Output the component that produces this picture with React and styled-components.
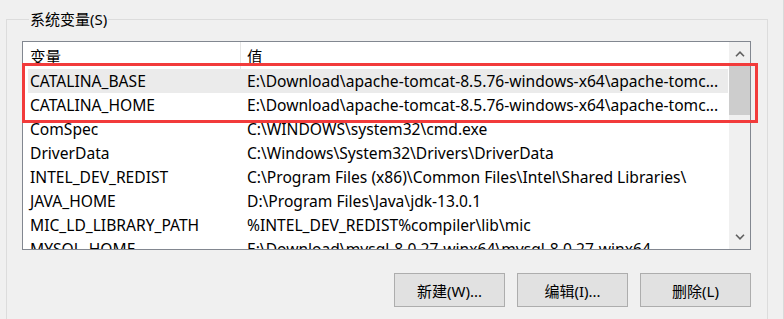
import React from 'react';
import styled, { createGlobalStyle } from 'styled-components';

const GlobalStyle = createGlobalStyle`
  html, body {
    margin: 0;
    padding: 0;
    background: #f0f0f0;
  }
  body {
    font-family: "Noto Sans", "Noto Sans CJK SC", sans-serif;
    font-size: 15px;
    color: #000;
  }
`;

const variables = [
  { name: 'CATALINA_BASE', value: 'E:\\Download\\apache-tomcat-8.5.76-windows-x64\\apache-tomc...', selected: true },
  { name: 'CATALINA_HOME', value: 'E:\\Download\\apache-tomcat-8.5.76-windows-x64\\apache-tomc...' },
  { name: 'ComSpec', value: 'C:\\WINDOWS\\system32\\cmd.exe' },
  { name: 'DriverData', value: 'C:\\Windows\\System32\\Drivers\\DriverData' },
  { name: 'INTEL_DEV_REDIST', value: 'C:\\Program Files (x86)\\Common Files\\Intel\\Shared Libraries\\' },
  { name: 'JAVA_HOME', value: 'D:\\Program Files\\Java\\jdk-13.0.1' },
  { name: 'MIC_LD_LIBRARY_PATH', value: '%INTEL_DEV_REDIST%compiler\\lib\\mic' },
  { name: 'MYSQL_HOME', value: 'E:\\Download\\mysql-8.0.27-winx64\\mysql-8.0.27-winx64' },
];

const Window = styled.div`
  position: relative;
  width: 783px;
  height: 319px;
  border-right: 1px solid #dadada;
  overflow: hidden;
`;

const Group = styled.fieldset`
  margin: 9px 0 0 6px;
  padding: 12px 16px 0 15px;
  width: 762px;
  height: 340px;
  box-sizing: border-box;
  border: 1px solid #dcdcdc;
  min-width: 0;
`;

const Legend = styled.legend`
  padding: 0 1px;
  margin-left: 7px;
  line-height: 20px;
  font-size: 15px;
`;

const ListView = styled.div`
  display: flex;
  height: 207px;
  border: 1px solid #828790;
  background: #fff;
  overflow: hidden;
  font-size: 15.6px;
`;

const Table = styled.div`
  flex: 1;
  min-width: 0;
  display: flex;
  flex-direction: column;
`;

const Row = styled.div`
  display: grid;
  grid-template-columns: 213px 1fr;
  flex: none;
  height: ${p => (p.$header ? '27px' : '24px')};
  margin-left: 5px;
  background: ${p => (p.$selected ? '#ebebeb' : 'transparent')};
  line-height: ${p => (p.$header ? '30px' : '25px')};
  white-space: nowrap;
  overflow: hidden;
`;

const Cell = styled.div`
  padding-left: ${p => (p.$second ? '6px' : '2px')};
  overflow: hidden;
  text-overflow: ellipsis;
  border-right: ${p => (p.$divider ? '1px solid #e5e5e5' : 'none')};
`;

const ScrollBar = styled.div`
  width: 21px;
  margin-left: 1px;
  display: flex;
  flex-direction: column;
  background: #f0f0f0;
`;

const ArrowButton = styled.div`
  height: 24px;
  display: flex;
  align-items: center;
  justify-content: center;
`;

const Thumb = styled.div`
  height: 49px;
  background: #cdcdcd;
`;

const Track = styled.div`
  flex: 1;
`;

const ButtonRow = styled.div`
  display: flex;
  justify-content: flex-end;
  gap: 12px;
  margin-top: 23px;
`;

const Button = styled.button`
  width: 111px;
  height: 34px;
  background: #e1e1e1;
  border: 1px solid #adadad;
  border-radius: 0;
  font-family: "Noto Sans", "Noto Sans CJK SC", sans-serif;
  font-size: 15px;
  color: #000;
  padding: 0;
`;

const Highlight = styled.div`
  position: absolute;
  left: 22px;
  top: 63px;
  width: 736px;
  height: 60px;
  box-sizing: border-box;
  border: 3px solid #f23b3b;
  pointer-events: none;
`;

const Chevron = ({ up }) => (
  <svg width="10" height="6" viewBox="0 0 10 6">
    <path
      d={up ? 'M1 5.2 L5 1.2 L9 5.2' : 'M1 0.8 L5 4.8 L9 0.8'}
      fill="none"
      stroke="#606060"
      strokeWidth="1.6"
    />
  </svg>
);

export default function App() {
  return (
    <Window>
      <GlobalStyle />
      <Group>
        <Legend>系统变量(S)</Legend>
        <ListView>
          <Table>
            <Row $header>
              <Cell $divider>变量</Cell>
              <Cell $second>值</Cell>
            </Row>
            {variables.map(v => (
              <Row key={v.name} $selected={v.selected}>
                <Cell>{v.name}</Cell>
                <Cell $second>{v.value}</Cell>
              </Row>
            ))}
          </Table>
          <ScrollBar>
            <ArrowButton><Chevron up /></ArrowButton>
            <Thumb />
            <Track />
            <ArrowButton><Chevron /></ArrowButton>
          </ScrollBar>
        </ListView>
        <ButtonRow>
          <Button>新建(W)...</Button>
          <Button>编辑(I)...</Button>
          <Button>删除(L)</Button>
        </ButtonRow>
      </Group>
      <Highlight />
    </Window>
  );
}
